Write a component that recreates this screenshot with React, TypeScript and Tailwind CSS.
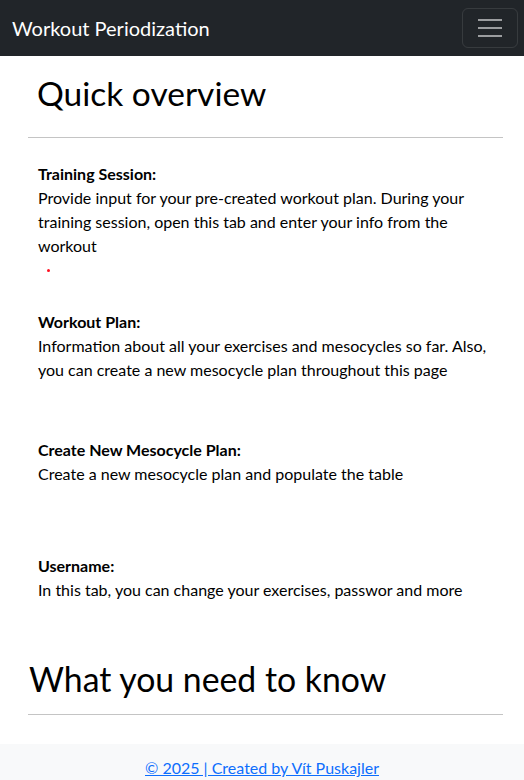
import React from "react";

const font = { fontFamily: "Lato, 'Liberation Sans', sans-serif" };

function Item({ title, children, className }: { title: string; children: React.ReactNode; className?: string }) {
  return (
    <div className={className}>
      <div className="font-bold leading-6">{title}</div>
      <div className="leading-6">{children}</div>
    </div>
  );
}

export default function App() {
  return (
    <div className="flex flex-col bg-white text-black text-[16px]" style={font}>
      <nav className="flex h-14 items-center justify-between bg-[#212529] pl-3 pr-[6px]">
        <span className="text-[20px] text-white">Workout Periodization</span>
        <button className="flex h-[40px] w-[56px] flex-col items-center justify-center gap-[6px] rounded-md border border-white/10">
          <span className="block h-[2px] w-[24px] bg-white/55" />
          <span className="block h-[2px] w-[24px] bg-white/55" />
          <span className="block h-[2px] w-[24px] bg-white/55" />
        </button>
      </nav>
      <main className="ml-[28px] w-[475px]">
        <h1 className="mt-4 h-[43px] pl-[9px] text-[33.5px] leading-[43px]">Quick overview</h1>
        <hr className="mt-[22px] border-t border-[#c4c4c4]" />
        <div className="pl-[10px]">
          <Item title="Training Session:" className="mt-6">
            Provide input for your pre-created workout plan. During your training session, open this tab and enter your info from the workout
          </Item>
          <div className="flex h-6 items-center pl-[9px]">
            <span className="block h-[3px] w-[3px] rounded-full bg-[#ff1020]" />
          </div>
          <Item title="Workout Plan:" className="mt-[28px]">
            Information about all your exercises and mesocycles so far. Also, you can create a new mesocycle plan throughout this page
          </Item>
          <Item title="Create New Mesocycle Plan:" className="mt-[56px]">
            Create a new mesocycle plan and populate the table
          </Item>
          <Item title="Username:" className="mt-[68px]">
            In this tab, you can change your exercises, passwor and more
          </Item>
        </div>
        <h2 className="mt-[56px] h-[43px] pl-px text-[33.8px] leading-[43px]">What you need to know</h2>
        <hr className="mt-[13px] border-t border-[#c4c4c4]" />
      </main>
      <footer className="mt-[29px] bg-[#f8f9fa] py-3 text-center leading-6">
        <a href="#" className="text-[#0d6efd] underline">© 2025 | Created by Vít Puskajler</a>
      </footer>
    </div>
  );
}
